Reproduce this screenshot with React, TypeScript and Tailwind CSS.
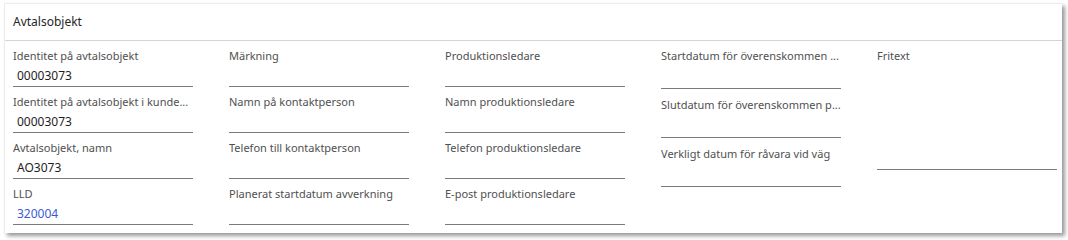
import clsx from "clsx";

type Field = {
  label: string;
  value?: string;
  link?: boolean;
  tall?: boolean;
};

const columns: Field[][] = [
  [
    { label: "Identitet på avtalsobjekt", value: "00003073" },
    { label: "Identitet på avtalsobjekt i kunde...", value: "00003073" },
    { label: "Avtalsobjekt, namn", value: "AO3073" },
    { label: "LLD", value: "320004", link: true },
  ],
  [
    { label: "Märkning" },
    { label: "Namn på kontaktperson" },
    { label: "Telefon till kontaktperson" },
    { label: "Planerat startdatum avverkning" },
  ],
  [
    { label: "Produktionsledare" },
    { label: "Namn produktionsledare" },
    { label: "Telefon produktionsledare" },
    { label: "E-post produktionsledare" },
  ],
  [
    { label: "Startdatum för överenskommen ...", tall: true },
    { label: "Slutdatum för överenskommen p...", tall: true },
    { label: "Verkligt datum för råvara vid väg", tall: true },
  ],
];

const FieldRow = ({ label, value, link, tall }: Field) => (
  <div className={clsx("flex flex-col", tall ? "mb-[6px]" : "mb-[5px]")}>
    <div className="h-[20px] leading-[20px] text-[11px] text-[#505050] whitespace-nowrap overflow-hidden">
      {label}
    </div>
    <div
      className={clsx(
        "border-b border-[#7a7a7a] pl-[4px] text-[12px] whitespace-nowrap",
        tall ? "h-[23px] leading-[20px]" : "h-[21px] leading-[19px]",
        link ? "text-[#3b5bd6]" : "text-[#1e1e1e]"
      )}
    >
      {value}
    </div>
  </div>
);

const App = () => {
  return (
    <div
      className="w-[1068px] h-[240px] bg-white pt-[3px] pl-[4px]"
      style={{ fontFamily: '"Noto Sans", "Open Sans", sans-serif' }}
    >
      <section className="w-[1058px] h-[230px] bg-white border-l border-t border-[#ececec] shadow-[3px_3px_4px_rgba(0,0,0,0.4)]">
        <header className="h-[37px] border-b border-[#d4d4d4] pl-[8px] flex items-center text-[12px] text-[#262626]">
          Avtalsobjekt
        </header>
        <div className="grid grid-cols-[180px_180px_180px_180px_180px] gap-x-[36px] pl-[8px] pt-[5px]">
          {columns.map((col, i) => (
            <div key={i} className="flex flex-col">
              {col.map((f) => (
                <FieldRow key={f.label} {...f} />
              ))}
            </div>
          ))}
          <div className="flex flex-col">
            <div className="h-[20px] leading-[20px] text-[11px] text-[#505050]">Fritext</div>
            <div className="h-[104px] border-b border-[#7a7a7a]" />
          </div>
        </div>
      </section>
    </div>
  );
};

export default App;
